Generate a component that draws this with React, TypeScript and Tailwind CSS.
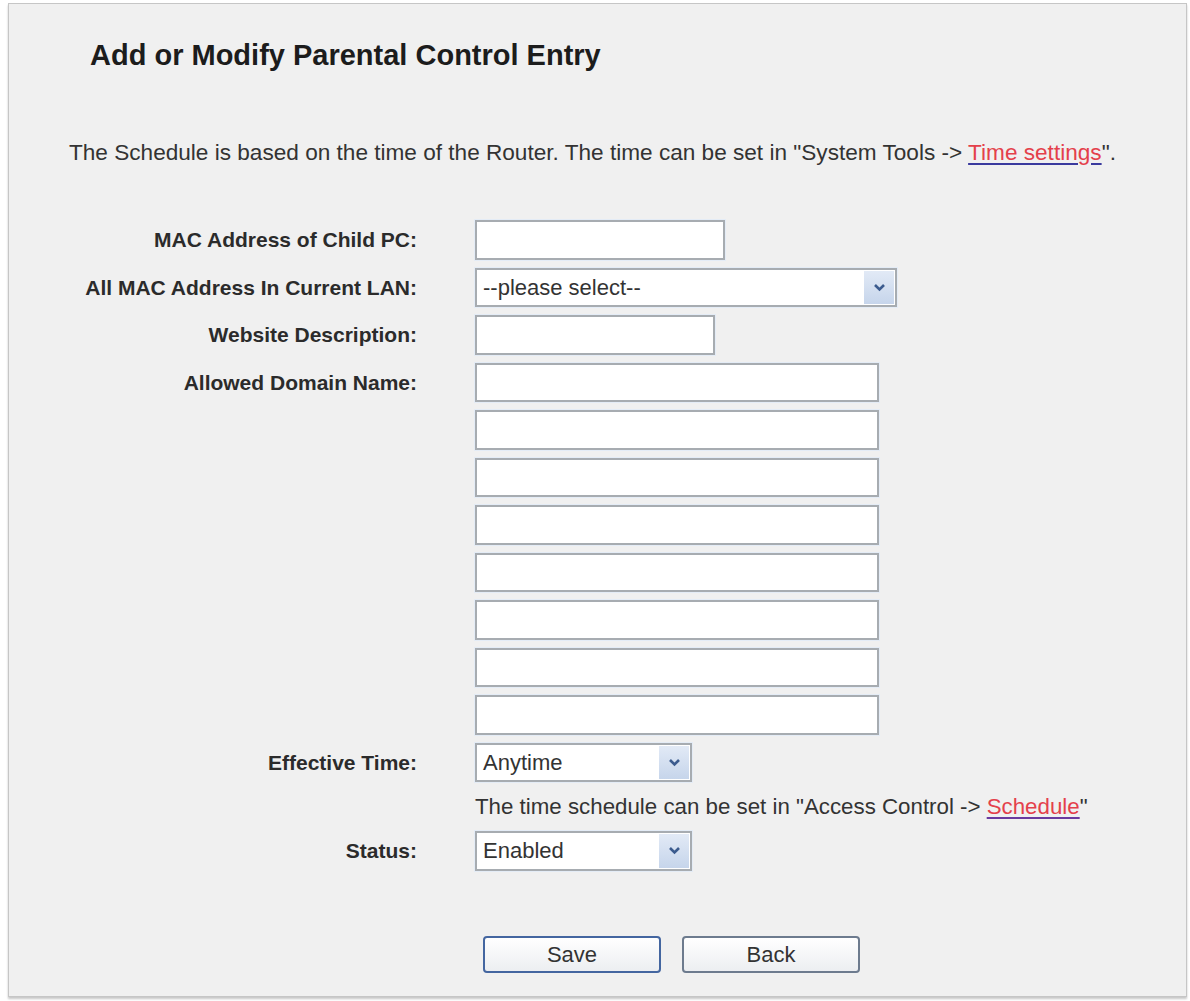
import React from "react";

const FONT = "font-['Liberation_Sans',Arial,sans-serif]";

// little blue drop-down button on the right of each select box
const Chevron = () => (
  <div className="flex h-full w-[30px] items-center justify-center bg-gradient-to-b from-[#e2eaf6] to-[#c6d5eb]">
    <svg width="13" height="9" viewBox="0 0 13 9">
      <polyline
        points="2,2 6.5,6.5 11,2"
        fill="none"
        stroke="#3b5b8e"
        strokeWidth="2.6"
      />
    </svg>
  </div>
);

const TextBox = ({ width }: { width: string }) => (
  <div
    className={`h-[39.5px] ${width} border-2 border-[#a7acb1] bg-white shadow-[0_0_0_1px_#e4ecf6]`}
  />
);

const SelectBox = ({ width, value }: { width: string; value: string }) => (
  <div
    className={`flex h-[39.5px] ${width} items-stretch border-2 border-[#a7acb1] bg-white shadow-[0_0_0_1px_#e4ecf6]`}
  >
    <span className="flex flex-1 items-center pl-[6px] text-[22px] text-[#333]">
      {value}
    </span>
    <div className="py-[1px] pr-[1px]">
      <Chevron />
    </div>
  </div>
);

const Label = ({ children }: { children?: React.ReactNode }) => (
  <div className="flex items-center justify-end text-[21px] font-bold text-[#2b2b2b]">
    {children}
  </div>
);

const Button = ({ text, primary }: { text: string; primary?: boolean }) => (
  <button
    className={`h-[37px] w-[178px] rounded-[4px] border-2 bg-gradient-to-b from-white to-[#eceef1] text-[22px] text-[#333] ${
      primary ? "border-[#4466a0]" : "border-[#6d7b8e]"
    }`}
  >
    {text}
  </button>
);

export default function App() {
  const domains = [0, 1, 2, 3, 4, 5, 6, 7];

  return (
    <div className={`min-h-screen bg-white pl-[8px] pt-[3px] ${FONT}`}>
      <div className="h-[994px] w-[1179px] border border-[#c6c6c6] bg-[#f0f0f0] shadow-[0_2px_2px_rgba(0,0,0,0.22)]">
        <h1 className="pl-[81px] pt-[34px] text-[29px] font-bold leading-[34px] text-[#1c1c1c]">
          Add or Modify Parental Control Entry
        </h1>

        <p className="mt-[68px] pl-[60px] text-[22.6px] leading-[26px] text-[#333]">
          The Schedule is based on the time of the Router. The time can be set
          in "System Tools -&gt;{" "}
          <a className="text-[#e4404b] underline decoration-[#3a3a9e] underline-offset-[3px]">
            Time settings
          </a>
          ".
        </p>

        <div className="mt-[54px] grid grid-cols-[408px_1fr] gap-x-[58px] gap-y-2">
          <Label>MAC Address of Child PC:</Label>
          <TextBox width="w-[250px]" />

          <Label>All MAC Address In Current LAN:</Label>
          <SelectBox width="w-[422px]" value="--please select--" />

          <Label>Website Description:</Label>
          <TextBox width="w-[240px]" />

          {domains.map((i) => (
            <React.Fragment key={i}>
              <Label>{i === 0 ? "Allowed Domain Name:" : null}</Label>
              <TextBox width="w-[404px]" />
            </React.Fragment>
          ))}

          <Label>Effective Time:</Label>
          <SelectBox width="w-[217px]" value="Anytime" />

          <div />
          <div className="flex h-[33px] items-center text-[22.3px] text-[#333]">
            The time schedule can be set in "Access Control -&gt;&nbsp;
            <a className="text-[#e4404b] underline decoration-[#6a3aa0] underline-offset-[3px]">
              Schedule
            </a>
            "
          </div>

          <Label>Status:</Label>
          <SelectBox width="w-[217px]" value="Enabled" />

          <div />
          <div className="mt-[57px] flex gap-[21px] pl-[8px]">
            <Button text="Save" primary />
            <Button text="Back" />
          </div>
        </div>
      </div>
    </div>
  );
}
